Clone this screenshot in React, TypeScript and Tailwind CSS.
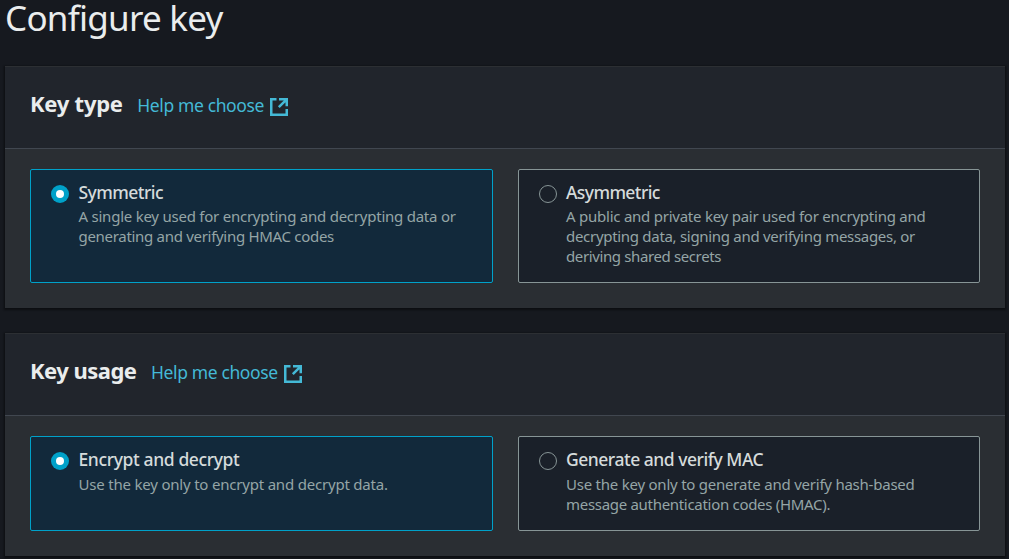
import React from "react";

type Line = { text: string; tracking: string };

function ExternalIcon() {
  return (
    <svg className="block h-[18px] w-[18px] shrink-0" viewBox="0 0 18 18" fill="none" stroke="#44b9d6" strokeWidth="2.5">
      <path d="M6.5 1.25H1.25V16.75H16.75V11" />
      <path d="M9 1.25H16.75V8.2M16.2 1.8L8.8 9.2" />
    </svg>
  );
}

function Radio({ checked }: { checked?: boolean }) {
  return checked ? (
    <span className="mt-[15px] flex h-[18px] w-[18px] shrink-0 items-center justify-center rounded-full bg-[#00a1c9]">
      <span className="h-[8px] w-[8px] rounded-full bg-white" />
    </span>
  ) : (
    <span className="mt-[15px] h-[18px] w-[18px] shrink-0 rounded-full border border-[#879596] bg-[#1a2029]" />
  );
}

function Tile({
  title,
  lines,
  checked,
  gap,
}: {
  title: Line;
  lines: Line[];
  checked?: boolean;
  gap: string;
}) {
  return (
    <div
      className={
        "flex gap-[9.5px] rounded-[2px] border pl-[20px] " +
        (checked ? "border-[#00a1c9] bg-[#12293b]" : "border-[#879596] bg-[#1a2029]")
      }
    >
      <Radio checked={checked} />
      <div className="pt-[10px] whitespace-nowrap">
        <div className={"text-[17.5px] leading-[25px] font-medium text-[#d5dbdb] " + title.tracking}>{title.text}</div>
        <div className={"text-[15px] leading-[20px] text-[#95a5a6] " + gap}>
          {lines.map((l) => (
            <div key={l.text} className={l.tracking}>
              {l.text}
            </div>
          ))}
        </div>
      </div>
    </div>
  );
}

function Panel({
  title,
  height,
  children,
}: {
  title: Line;
  height: string;
  children: React.ReactNode;
}) {
  return (
    <section className="mx-[5px] w-[1000px] bg-[#2a2e33] shadow-[0_1px_2px_1px_rgba(0,0,0,0.45)]">
      <header className="flex h-[83px] items-center border-t border-b border-t-[#2c2f33] border-b-[#414750] bg-[#21252c] pl-[25px] whitespace-nowrap">
        <h2 className={"pb-[10px] text-[22px] leading-[30px] font-bold text-[#eaeded] " + title.tracking}>{title.text}</h2>
        <a className="ml-[14.5px] flex items-center gap-[6px] pb-[2px] text-[17.5px] leading-[28px] text-[#44b9d6]">
          <span className="pb-[4px] tracking-[-0.38px]">Help me choose</span>
          <ExternalIcon />
        </a>
      </header>
      <div className={"mx-[25px] mt-[20px] mb-[25px] grid grid-cols-2 gap-[25px] " + height}>{children}</div>
      <div className="-mt-px h-px" />
    </section>
  );
}

export default function App() {
  return (
    <main className="flex h-[559px] w-[1009px] flex-col overflow-hidden bg-[#16191f] font-['Noto_Sans',sans-serif]">
      <h1 className="h-[66px] shrink-0 pl-[5px] text-[35px] leading-[36px] tracking-[-0.74px] whitespace-nowrap text-[#eaeded]">
        Configure key
      </h1>
      <div className="flex flex-col gap-[25px]">
        <Panel title={{ text: "Key type", tracking: "tracking-[-0.25px]" }} height="h-[114px]">
          <Tile
            checked
            gap="pt-[1px]"
            title={{ text: "Symmetric", tracking: "tracking-[-0.55px]" }}
            lines={[
              { text: "A single key used for encrypting and decrypting data or", tracking: "tracking-[-0.235px]" },
              { text: "generating and verifying HMAC codes", tracking: "tracking-[-0.3px]" },
            ]}
          />
          <Tile
            gap="pt-[1px]"
            title={{ text: "Asymmetric", tracking: "tracking-[-0.6px]" }}
            lines={[
              { text: "A public and private key pair used for encrypting and", tracking: "tracking-[-0.24px]" },
              { text: "decrypting data, signing and verifying messages, or", tracking: "tracking-[-0.3px]" },
              { text: "deriving shared secrets", tracking: "tracking-[-0.38px]" },
            ]}
          />
        </Panel>
        <Panel title={{ text: "Key usage", tracking: "tracking-[-0.52px]" }} height="h-[95px]">
          <Tile
            checked
            gap="pt-[2px]"
            title={{ text: "Encrypt and decrypt", tracking: "tracking-[-0.38px]" }}
            lines={[{ text: "Use the key only to encrypt and decrypt data.", tracking: "tracking-[-0.2px]" }]}
          />
          <Tile
            gap="pt-[2px]"
            title={{ text: "Generate and verify MAC", tracking: "tracking-[-0.48px]" }}
            lines={[
              { text: "Use the key only to generate and verify hash-based", tracking: "tracking-[-0.23px]" },
              { text: "message authentication codes (HMAC).", tracking: "tracking-[-0.3px]" },
            ]}
          />
        </Panel>
      </div>
    </main>
  );
}
